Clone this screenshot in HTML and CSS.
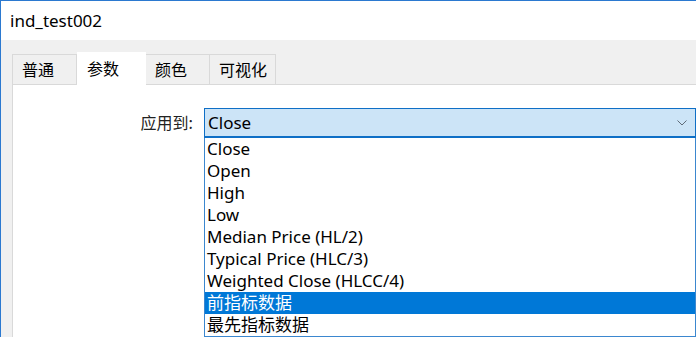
FILE: index.html
```html
<!DOCTYPE html>
<html>
<head>
<meta charset="utf-8">
<link rel="stylesheet" href="styles.css">
</head>
<body>
<div class="window">
  <div class="titlebar">ind_test002</div>
  <div class="client">
    <div class="tabs">
      <div class="tab">普通</div>
      <div class="tab active">参数</div>
      <div class="tab">颜色</div>
      <div class="tab">可视化</div>
    </div>
    <div class="panel">
      <div class="field">
        <div class="label">应用到:</div>
        <div class="combo">
          <div class="select">
            <span class="value">Close</span>
            <svg class="chev" width="10" height="6" viewBox="0 0 10 6"><path d="M0.5 0.5 L5 5 L9.5 0.5" fill="none" stroke="#5f6b78" stroke-width="1"/></svg>
          </div>
          <ul class="list">
            <li>Close</li>
            <li>Open</li>
            <li>High</li>
            <li>Low</li>
            <li>Median Price (HL/2)</li>
            <li>Typical Price (HLC/3)</li>
            <li>Weighted Close (HLCC/4)</li>
            <li class="sel">前指标数据</li>
            <li>最先指标数据</li>
          </ul>
        </div>
      </div>
    </div>
  </div>
</div>
</body>
</html>
```
FILE: styles.css
```css
html, body {
  margin: 0;
  padding: 0;
  width: 696px;
  height: 337px;
  overflow: hidden;
  background: #ffffff;
}
.window {
  box-sizing: border-box;
  width: 696px;
  height: 337px;
  overflow: hidden;
  border-left: 1px solid #2b79d0;
  border-top: 1px solid #2b79d0;
  font-family: "Noto Sans", "Noto Sans CJK SC", sans-serif;
  color: #000;
}
.titlebar {
  height: 39px;
  line-height: 39px;
  padding-left: 9px;
  font-size: 17px;
  background: #fff;
}
.client {
  background: #f0f0f0;
  padding: 12px 0 0 11px;
  height: 297px;
  box-sizing: border-box;
}
.tabs {
  display: flex;
  align-items: flex-end;
  height: 33px;
}
.tab {
  height: 30px;
  line-height: 28px;
  box-sizing: border-box;
  border: 1px solid #d9d9d9;
  border-bottom: none;
  border-left: none;
  background: #f0f0f0;
  font-family: "Noto Sans CJK SC", sans-serif;
  font-size: 16px;
  padding-left: 9px;
  white-space: nowrap;
  margin-bottom: 1px;
}
.tab:first-child {
  border-left: 1px solid #d9d9d9;
  width: 65px;
}
.tab:nth-child(2) { width: 69px; }
.tab:nth-child(3) { width: 64px; }
.tab:nth-child(4) { width: 66px; }
.tab.active {
  height: 33px;
  line-height: 31px;
  background: #fff;
  margin-bottom: 0;
  border-color: #fff;
  position: relative;
  z-index: 1;
  padding-left: 10px;
}
.panel {
  background: #fff;
  border: 1px solid #d9d9d9;
  border-right: none;
  height: 300px;
  margin-top: -1px;
  padding-top: 23px;
}
.field {
  display: flex;
  gap: 11px;
}
.label {
  width: 180px;
  flex: none;
  text-align: right;
  font-family: "Noto Sans CJK SC", sans-serif;
  font-size: 16px;
  line-height: 29px;
  color: #222;
}
.combo {
  position: relative;
  flex: 1;
}
.select {
  box-sizing: border-box;
  height: 30px;
  border: 1px solid #0f6fc6;
  border-bottom: 2px solid #0f6fc6;
  background: #cce4f7;
  display: flex;
  align-items: center;
  justify-content: space-between;
  padding: 0 8px 1px 3px;
  font-size: 17px;
}
.chev {
  margin-top: 1px;
}
.list {
  position: absolute;
  top: 30px;
  left: 0;
  right: 0;
  margin: 0;
  padding: 0;
  list-style: none;
  background: #fff;
  border: 1px solid #3b87cf;
  border-top: none;
  z-index: 2;
}
.list li {
  height: 22px;
  line-height: 22px;
  padding-left: 2px;
  font-size: 17px;
  white-space: nowrap;
}
.list li.sel {
  background: #0078d7;
  color: #fff;
}
```
